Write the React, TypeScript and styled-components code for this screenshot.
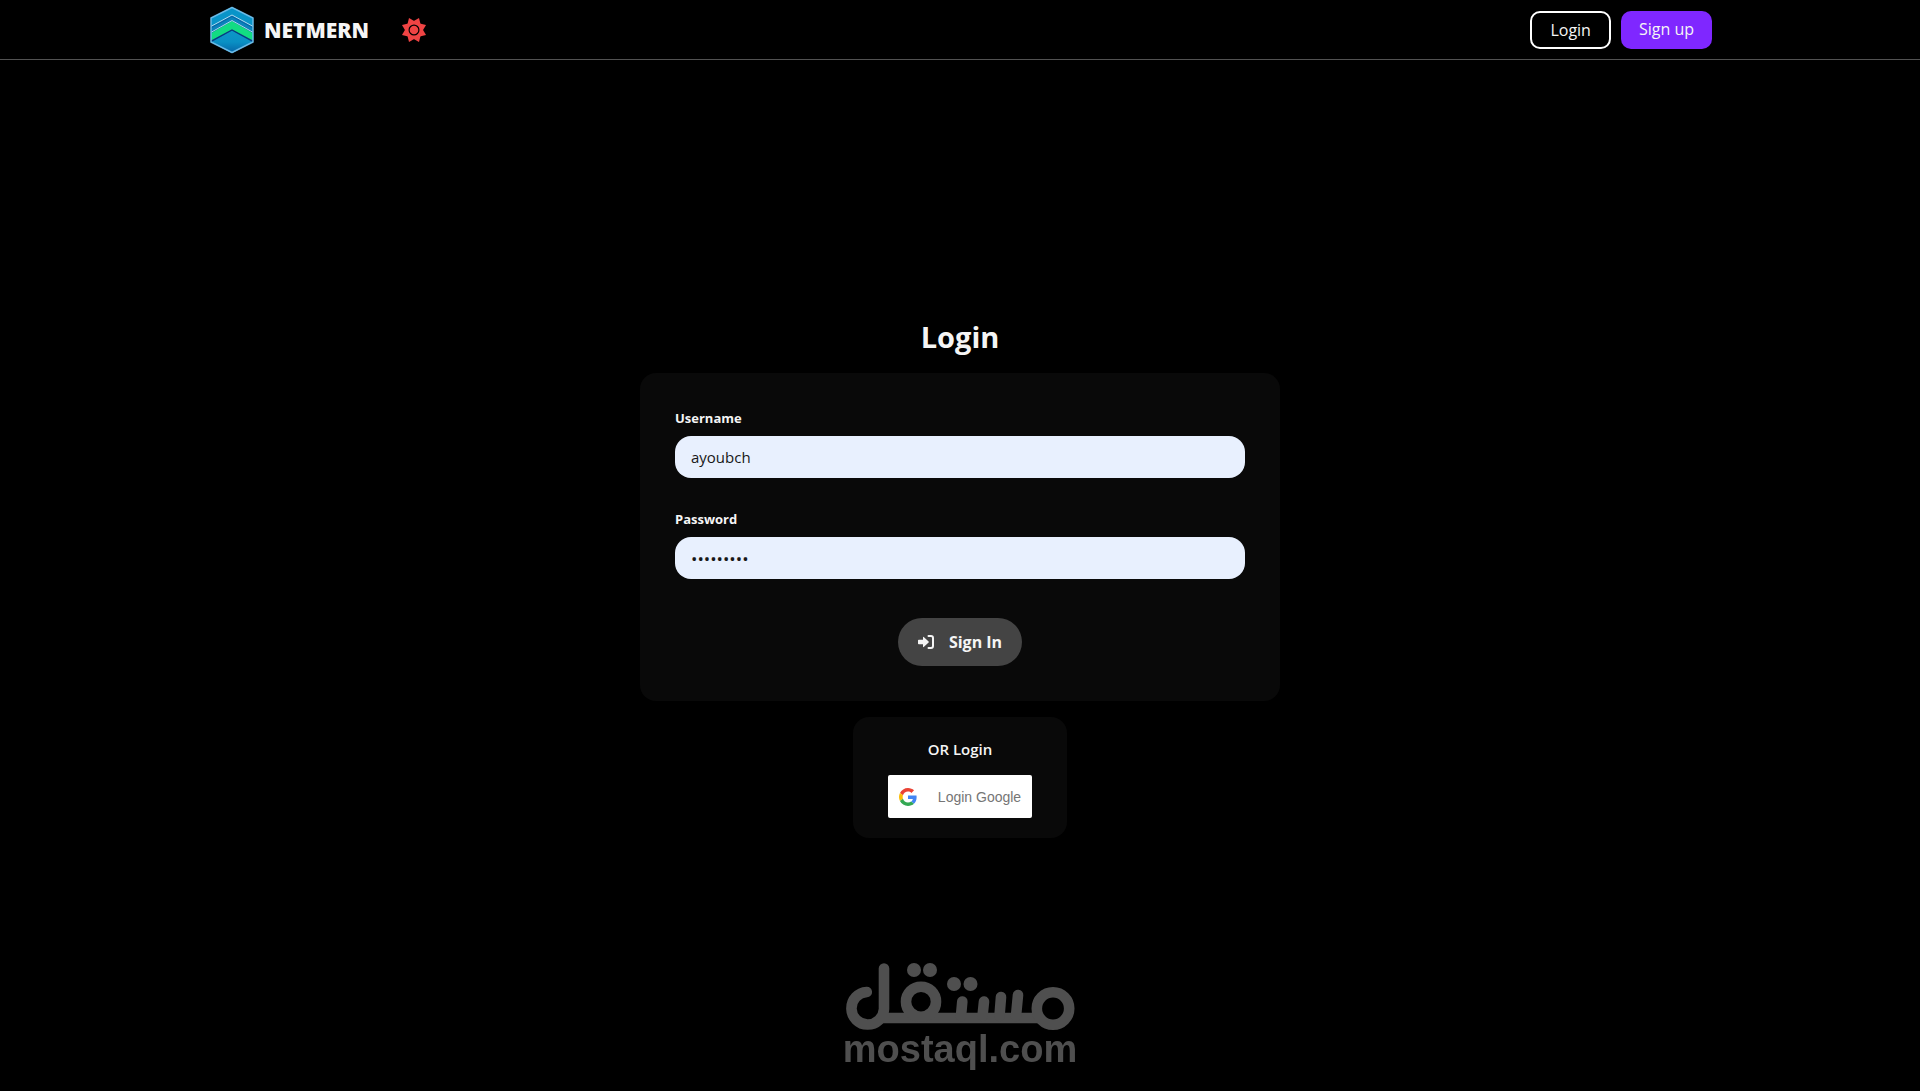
import React, { useState } from "react";
import styled, { createGlobalStyle } from "styled-components";

const GlobalStyle = createGlobalStyle`
  *, *::before, *::after { box-sizing: border-box; }
  body {
    margin: 0;
    background: #000;
    color: #f5f5f5;
    font-family: "Segoe UI", "Open Sans", "Noto Sans", sans-serif;
    font-size: 16px;
    line-height: 24px;
  }
  button, input { font: inherit; }
`;

const Page = styled.div`
  min-height: 100vh;
  display: flex;
  flex-direction: column;
`;

const Header = styled.header`
  border-bottom: 1px solid #525252;
`;

const Nav = styled.nav`
  max-width: 1536px;
  height: 59px;
  margin: 0 auto;
  padding: 0 16px;
  display: flex;
  align-items: center;
  justify-content: space-between;
`;

const NavGroup = styled.div<{ $gap: number }>`
  display: flex;
  align-items: center;
  gap: ${(p) => p.$gap}px;
`;

const Brand = styled.a`
  display: flex;
  align-items: center;
  gap: 8px;
  color: #f5f5f5;
  font-size: 21px;
  font-weight: 800;
  text-decoration: none;
`;

const ThemeButton = styled.button`
  display: flex;
  padding: 0;
  border: 0;
  background: none;
  color: #ef4444;
  cursor: pointer;
`;

const NavLink = styled.a<{ $filled?: boolean }>`
  height: 38px;
  padding: ${(p) => (p.$filled ? "0 18px 2px" : "0 18px")};
  display: flex;
  align-items: center;
  border: ${(p) => (p.$filled ? "0" : "2px solid #fff")};
  border-radius: 10px;
  background: ${(p) => (p.$filled ? "#7f27ff" : "transparent")};
  color: #f5f5f5;
  text-decoration: none;
`;

const Main = styled.main`
  flex: 1;
  display: flex;
  flex-direction: column;
  align-items: center;
  justify-content: center;
`;

const Title = styled.h1`
  margin: 0 0 12px;
  font-size: 29px;
  font-weight: 700;
  line-height: 48px;
`;

const LoginForm = styled.form`
  width: 100%;
  max-width: 640px;
  padding: 35px;
  display: flex;
  flex-direction: column;
  gap: 31px;
  border-radius: 16px;
  background: #090909;
`;

const Field = styled.div`
  display: flex;
  flex-direction: column;
  gap: 8px;
`;

const Label = styled.label`
  font-size: 13px;
  font-weight: 700;
  line-height: 20px;
`;

const Input = styled.input`
  height: 42px;
  padding: 0 16px;
  border: 0;
  border-radius: 16px;
  outline: 0;
  background: #e8f0fe;
  color: #171717;
  font-size: ${(p) => (p.type === "password" ? 17 : 15)}px;
`;

const SubmitButton = styled.button`
  align-self: center;
  height: 48px;
  margin-top: 8px;
  padding: 0 20px;
  display: flex;
  align-items: center;
  gap: 15px;
  border: 0;
  border-radius: 24px;
  background: #444;
  color: #f5f5f5;
  font-weight: 700;
  cursor: pointer;
`;

const Alternative = styled.section`
  margin-top: 16px;
  padding: 20px 35px;
  display: flex;
  flex-direction: column;
  align-items: center;
  gap: 14px;
  border-radius: 16px;
  background: #090909;
`;

const AlternativeTitle = styled.h2`
  margin: 0;
  font-size: 15px;
  font-weight: 600;
  line-height: 24px;
`;

const GoogleButton = styled.button`
  height: 43px;
  padding: 0 11px;
  display: flex;
  align-items: center;
  gap: 21px;
  border: 0;
  border-radius: 2px;
  background: #fff;
  color: #757575;
  font-family: "Liberation Sans", Arial, sans-serif;
  font-size: 14px;
  cursor: pointer;
`;

const Watermark = styled.div`
  position: fixed;
  left: 0;
  right: 0;
  bottom: 24px;
  display: flex;
  flex-direction: column;
  align-items: center;
  color: #4f4f4f;
  font-family: "Liberation Sans", Arial, sans-serif;
  font-size: 38px;
  font-weight: 700;
  line-height: 36px;
  pointer-events: none;
`;

const BrandLogo = () => (
  <svg width="48" height="48" viewBox="0 0 48 48" aria-hidden="true">
    <defs>
      <clipPath id="hex">
        <path d="M24 1 45 12V36L24 47 3 36V12Z" />
      </clipPath>
      <linearGradient id="deep" x1="0" y1="0" x2="0" y2="1">
        <stop offset="0" stopColor="#0c97c8" />
        <stop offset="0.5" stopColor="#0a90c4" />
        <stop offset="1" stopColor="#0560a4" />
      </linearGradient>
    </defs>
    <g clipPath="url(#hex)">
      <rect width="48" height="48" fill="#0994c8" />
      <path d="M0 22 24 9 48 22V48H0Z" fill="#0768aa" />
      <path d="M0 24 24 11 48 24V27L24 14 0 27Z" fill="#0a83bb" />
      <path d="M0 29 24 15 48 29V37L24 24 0 37Z" fill="#12dc82" />
      <path d="M0 37 24 24 48 37V48H0Z" fill="url(#deep)" />
      <path d="M0 22 24 9 48 22M0 28 24 14.500 48 28" fill="none" stroke="#bfe6f5" strokeWidth="0.900" />
      <path d="M0 37 24 24 48 37" fill="none" stroke="#073a82" strokeWidth="1.400" />
    </g>
    <path d="M24 1.500 45 12V36L24 46.500 3 36V12Z" fill="none" stroke="#69b9e6" strokeWidth="1.500" strokeLinejoin="round" />
  </svg>
);

const rays = [0, 45, 90, 135, 180, 225, 270, 315];

const SunIcon = () => (
  <svg width="26" height="26" viewBox="-13 -13 26 26" fill="currentColor" aria-hidden="true">
    {rays.map((angle) => (
      <path key={angle} d="M-4.500 -7 0 -13 4.500 -7Z" transform={`rotate(${angle + 22.5})`} />
    ))}
    <circle r="7" fill="none" stroke="currentColor" strokeWidth="3" />
    <circle r="4.300" />
  </svg>
);

const SignInIcon = () => (
  <svg width="16" height="16" viewBox="0 0 16 16" fill="currentColor" aria-hidden="true">
    <path d="M0.800 5.800H5V3.600Q5 2.300 6 3.200L10.600 7.400Q11.200 8 10.600 8.600L6 12.800Q5 13.700 5 12.400V10.200H0.800Q0 10.200 0 9.400V6.600Q0 5.800 0.800 5.800Z" />
    <path d="M10.500 2H13A2 2 0 0 1 15 4V12A2 2 0 0 1 13 14H10.500" fill="none" stroke="currentColor" strokeWidth="2" strokeLinecap="round" />
  </svg>
);

const GoogleIcon = () => (
  <svg width="18" height="18" viewBox="0 0 48 48" aria-hidden="true">
    <path fill="#EA4335" d="M24 9.500c3.540 0 6.710 1.220 9.210 3.600l6.850-6.850C35.900 2.380 30.470 0 24 0 14.620 0 6.510 5.380 2.560 13.220l7.980 6.190C12.430 13.720 17.740 9.500 24 9.500z" />
    <path fill="#4285F4" d="M46.980 24.550c0-1.570-.15-3.090-.38-4.550H24v9.020h12.940c-.58 2.960-2.260 5.480-4.780 7.180l7.730 6c4.510-4.180 7.090-10.360 7.090-17.650z" />
    <path fill="#FBBC05" d="M10.530 28.590c-.48-1.450-.76-2.990-.76-4.590s.27-3.140.76-4.590l-7.980-6.190C.92 16.460 0 20.120 0 24c0 3.880.92 7.540 2.560 10.780l7.970-6.190z" />
    <path fill="#34A853" d="M24 48c6.480 0 11.930-2.130 15.890-5.810l-7.730-6c-2.150 1.450-4.920 2.300-8.160 2.300-6.260 0-11.570-4.220-13.470-9.910l-7.980 6.190C6.510 42.620 14.620 48 24 48z" />
  </svg>
);

const WatermarkLogo = () => (
  <svg width="230" height="68" viewBox="0 0 230 68" role="img" aria-label="مستقل">
    <g fill="none" stroke="currentColor" strokeWidth="10.600" strokeLinecap="round">
      <path d="M21.800 29A16.300 16.300 0 1 0 39 46V5.500" />
      <path d="M34 55H197" strokeLinecap="butt" />
      <circle cx="76" cy="38.700" r="15" />
      <circle cx="208" cy="45.500" r="16.200" />
      <path d="M116 53 117.300 38.500M137.500 53 139 38.500M154.500 53 156 34M171 53 173 32" />
    </g>
    <g fill="currentColor">
      <circle cx="69" cy="7" r="7" />
      <circle cx="85" cy="7" r="7" />
      <circle cx="109" cy="21" r="7" />
      <circle cx="125.500" cy="21" r="7" />
    </g>
  </svg>
);

export default function App() {
  const [username, setUsername] = useState("ayoubch");
  const [password, setPassword] = useState("password1");

  return (
    <Page>
      <GlobalStyle />
      <Header>
        <Nav>
          <NavGroup $gap={32}>
            <Brand href="#">
              <BrandLogo />
              NETMERN
            </Brand>
            <ThemeButton type="button" aria-label="Toggle theme">
              <SunIcon />
            </ThemeButton>
          </NavGroup>
          <NavGroup $gap={10}>
            <NavLink href="#login">Login</NavLink>
            <NavLink href="#signup" $filled>Sign up</NavLink>
          </NavGroup>
        </Nav>
      </Header>
      <Main>
        <Title>Login</Title>
        <LoginForm onSubmit={(e) => e.preventDefault()}>
          <Field>
            <Label htmlFor="username">Username</Label>
            <Input id="username" type="text" value={username} onChange={(e) => setUsername(e.target.value)} />
          </Field>
          <Field>
            <Label htmlFor="password">Password</Label>
            <Input id="password" type="password" value={password} onChange={(e) => setPassword(e.target.value)} />
          </Field>
          <SubmitButton type="submit">
            <SignInIcon />
            Sign In
          </SubmitButton>
        </LoginForm>
        <Alternative>
          <AlternativeTitle>OR Login</AlternativeTitle>
          <GoogleButton type="button">
            <GoogleIcon />
            Login Google
          </GoogleButton>
        </Alternative>
      </Main>
      <Watermark>
        <WatermarkLogo />
        <span>mostaql.com</span>
      </Watermark>
    </Page>
  );
}
